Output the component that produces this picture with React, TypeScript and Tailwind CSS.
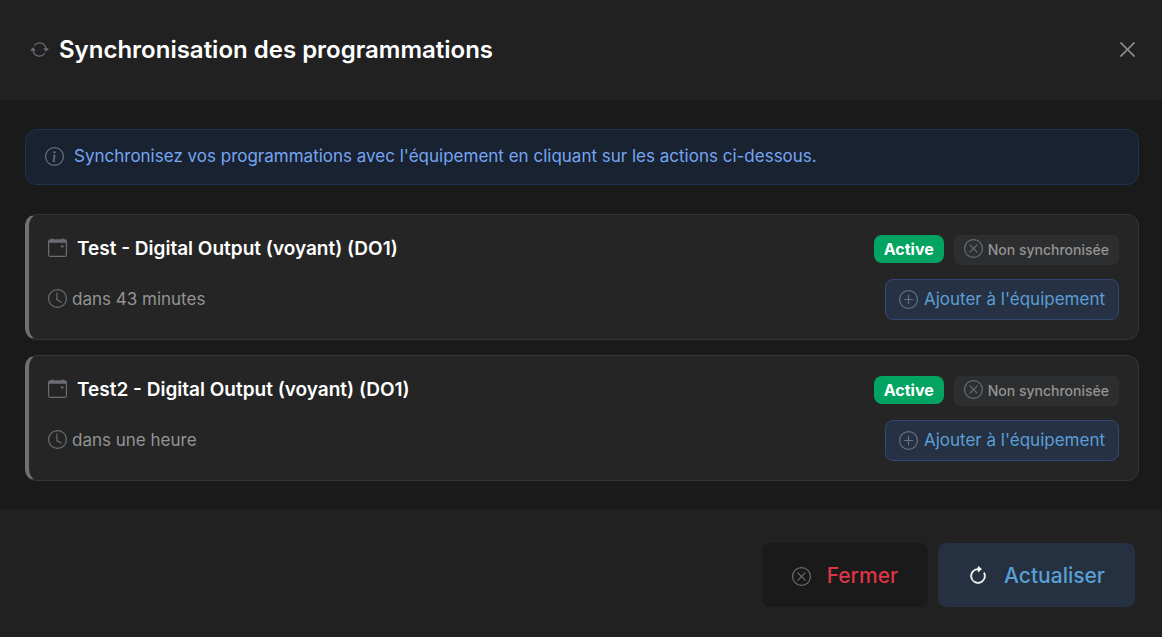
import {
  BsArrowClockwise,
  BsArrowRepeat,
  BsCalendarEvent,
  BsClock,
  BsInfoCircle,
  BsPlusCircle,
  BsXCircle,
  BsXLg,
} from 'react-icons/bs'

type Programmation = {
  id: number
  name: string
  next: string
}

const PROGRAMMATIONS: Programmation[] = [
  { id: 1, name: 'Test - Digital Output (voyant) (DO1)', next: 'dans 43 minutes' },
  { id: 2, name: 'Test2 - Digital Output (voyant) (DO1)', next: 'dans une heure' },
]

function ProgrammationCard({ name, next }: Programmation) {
  return (
    <li className="flex items-start justify-between gap-4 rounded-xl border border-l-4 border-[#343536] border-l-[#6c7175] bg-[#252525] pt-5 pr-[19px] pb-[19px] pl-[19px]">
      <div className="flex flex-col gap-[25px]">
        <h2 className="flex h-7 items-center gap-[10px] text-[19px] font-semibold text-white">
          <BsCalendarEvent size={19} className="mb-1 text-[#6b6d74]" aria-hidden />
          {name}
        </h2>
        <p className="flex h-6 items-center gap-[5px] text-[17px] text-[#949494]">
          <BsClock size={19} className="mb-1 text-[#6b6d74]" aria-hidden />
          {next}
        </p>
      </div>

      <div className="flex flex-col items-end gap-[14px]">
        <div className="flex items-start gap-[10px]">
          <span className="flex h-7 items-center rounded-lg bg-[#03a362] px-[10px] text-base font-bold text-white">
            Active
          </span>
          <span className="flex h-[30px] items-center gap-[5px] rounded-md bg-[#2d2e2f] px-[10px] text-sm font-medium text-[#949494]">
            <BsXCircle size={19} className="mb-1 text-[#6b6d74]" aria-hidden />
            Non synchronisée
          </span>
        </div>
        <button
          type="button"
          className="flex h-[41px] items-center gap-1.5 rounded-lg border border-[#344876] bg-[#273144] px-[13px] text-[17px] text-[#5a9fd4]"
        >
          <BsPlusCircle size={19} className="text-[#667084]" aria-hidden />
          Ajouter à l'équipement
        </button>
      </div>
    </li>
  )
}

export default function App() {
  return (
    <div
      role="dialog"
      aria-labelledby="sync-title"
      className="min-h-screen bg-[#212121] font-['Inter',sans-serif]"
    >
      {/* Header */}
      <header className="flex h-[100px] items-center justify-between pr-[25px] pl-[30px]">
        <div className="flex items-center gap-[10px]">
          <BsArrowRepeat size={19} className="mb-0.5 text-[#6b6d74]" aria-hidden />
          <h1 id="sync-title" className="text-2xl font-semibold text-white">
            Synchronisation des programmations
          </h1>
        </div>
        <button type="button" aria-label="Fermer la fenêtre" className="mb-0.5 text-[#969696]">
          <BsXLg size={19} strokeWidth={0.4} />
        </button>
      </header>

      {/* Body */}
      <main className="bg-[#1a1a1a] py-[29px] pr-[23px] pl-[25px]">
        <div className="flex h-14 items-center gap-[10px] rounded-xl border border-[#1e3352] bg-[#192230] px-[19px] text-[17px] text-[#76a5f3]">
          <BsInfoCircle size={19} className="mb-0.5 text-[#68717f]" aria-hidden />
          <p>Synchronisez vos programmations avec l'équipement en cliquant sur les actions ci-dessous.</p>
        </div>

        <ul className="mt-[29px] flex flex-col gap-[15px]">
          {PROGRAMMATIONS.map((programmation) => (
            <ProgrammationCard key={programmation.id} {...programmation} />
          ))}
        </ul>
      </main>

      {/* Footer */}
      <footer className="flex items-center justify-end gap-[10px] pt-[33px] pr-[27px] pb-[30px]">
        <button
          type="button"
          className="flex h-16 items-center gap-4 rounded-lg bg-[#1a1a1a] px-[30px] pt-0.5 text-[21px] font-medium text-[#dc3545]"
        >
          <BsXCircle size={19} className="text-[#6b6d74]" aria-hidden />
          Fermer
        </button>
        <button
          type="button"
          className="flex h-16 items-center gap-4 rounded-lg bg-[#253040] px-[30px] pt-0.5 text-[21px] font-medium text-[#5a9fd4]"
        >
          <BsArrowClockwise size={20} strokeWidth={0.4} className="text-white" aria-hidden />
          Actualiser
        </button>
      </footer>
    </div>
  )
}
